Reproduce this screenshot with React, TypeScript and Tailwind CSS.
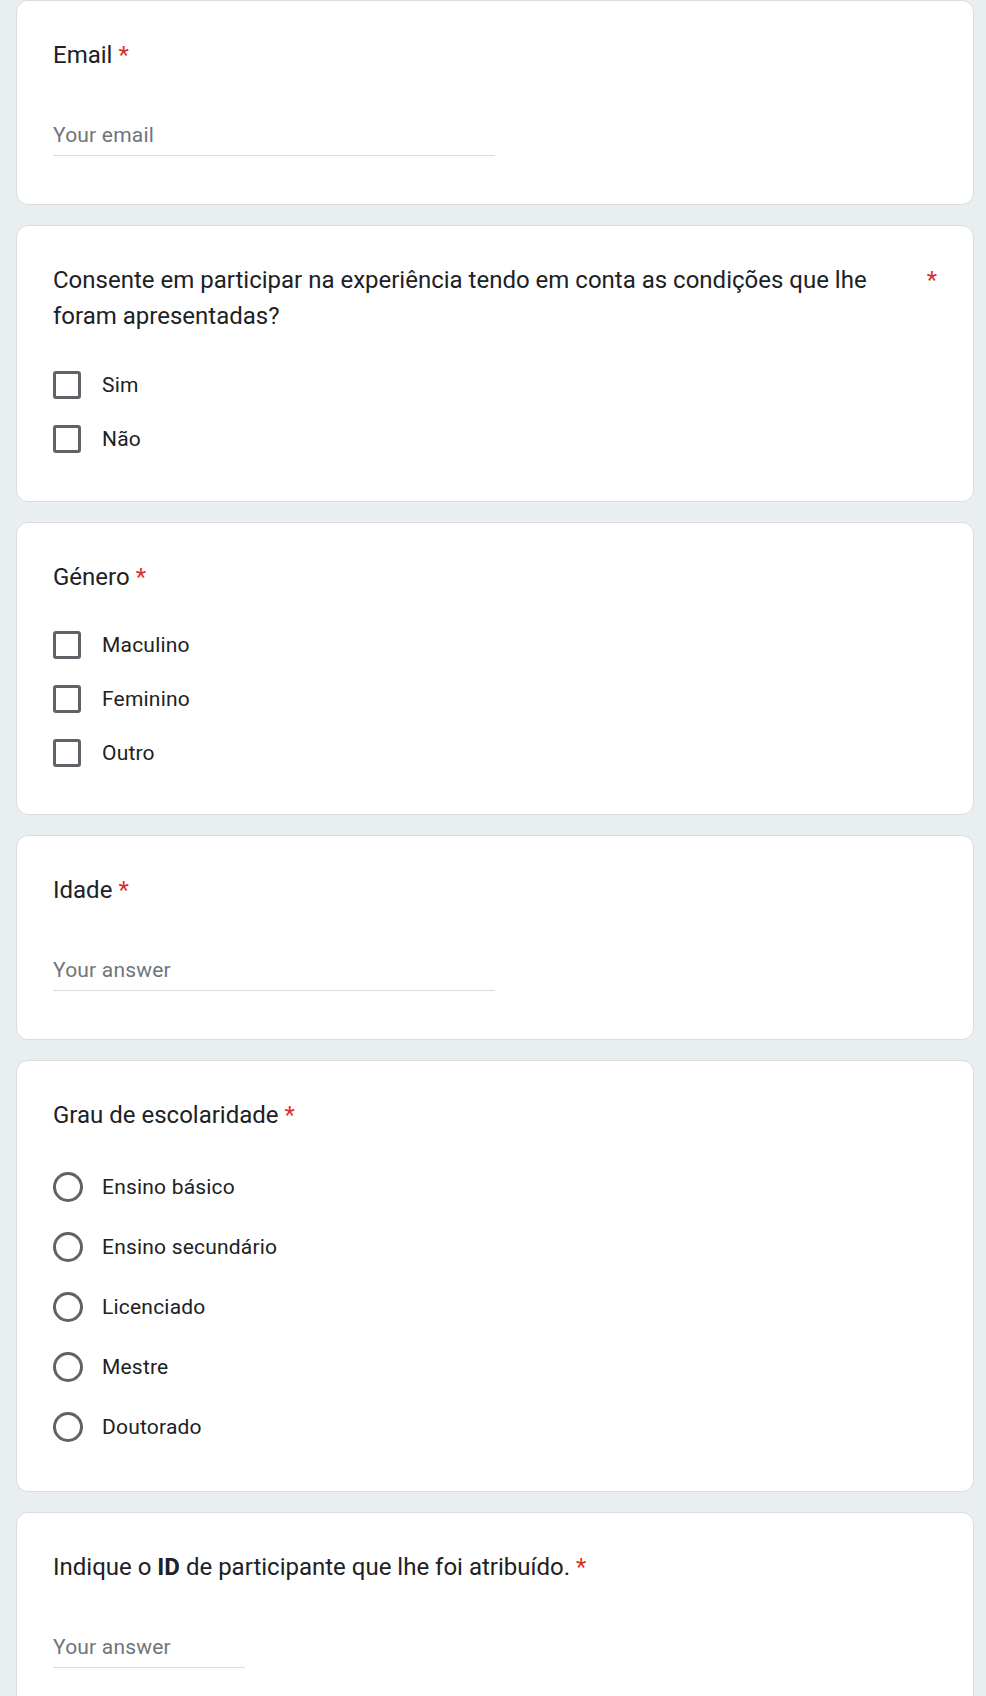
import React from "react";

type Props = { children: React.ReactNode; pb?: string };

const Card = ({ children, pb = "pb-[35px]" }: Props) => (
  <div className={`bg-white border border-[#dadce0] rounded-[12px] pt-[36px] px-[36px] ${pb}`}>
    {children}
  </div>
);

const Title = ({ children }: { children: React.ReactNode }) => (
  <div className="flex text-[24px] leading-[36px] text-[#202124]">
    <span>{children}</span>
    <span className="shrink-0 pl-[6px] text-[#d93025]">*</span>
  </div>
);

const TextInput = ({ placeholder, width }: { placeholder: string; width: string }) => (
  <div className={`mt-[35px] h-[48px] flex items-end pb-[5px] border-b-[1.5px] border-[#dadce0] ${width}`}>
    <span className="text-[21px] leading-[30px] text-[#70757a] tracking-[0.2px]">{placeholder}</span>
  </div>
);

const CheckOption = ({ label }: { label: string }) => (
  <div className="h-[54px] flex items-center gap-[21px]">
    <div className="w-[28px] h-[28px] border-[3px] border-[#5f6368] rounded-[3px] shrink-0" />
    <span className="text-[21px] leading-[30px] text-[#202124] tracking-[0.2px]">{label}</span>
  </div>
);

const RadioOption = ({ label }: { label: string }) => (
  <div className="h-[60px] flex items-center gap-[19px]">
    <div className="w-[30px] h-[30px] border-[3px] border-[#5f6368] rounded-full shrink-0" />
    <span className="text-[21px] leading-[30px] text-[#202124] tracking-[0.2px]">{label}</span>
  </div>
);

export default function App() {
  return (
    <div className="min-h-screen bg-[#e9eef1] pl-[16px] pr-[12px] font-['Roboto','Liberation_Sans',sans-serif]">
      <div className="flex flex-col gap-[20px]">
        <Card pb="pb-[48px]">
          <Title>Email</Title>
          <TextInput placeholder="Your email" width="w-1/2" />
        </Card>

        <Card pb="pb-[35px]">
          <Title>Consente em participar na experiência tendo em conta as condições que lhe foram apresentadas?</Title>
          <div className="mt-[24px]">
            <CheckOption label="Sim" />
            <CheckOption label="Não" />
          </div>
        </Card>

        <Card pb="pb-[34px]">
          <Title>Género</Title>
          <div className="mt-[23px]">
            <CheckOption label="Maculino" />
            <CheckOption label="Feminino" />
            <CheckOption label="Outro" />
          </div>
        </Card>

        <Card pb="pb-[48px]">
          <Title>Idade</Title>
          <TextInput placeholder="Your answer" width="w-1/2" />
        </Card>

        <Card pb="pb-[34px]">
          <Title>Grau de escolaridade</Title>
          <div className="mt-[24px]">
            <RadioOption label="Ensino básico" />
            <RadioOption label="Ensino secundário" />
            <RadioOption label="Licenciado" />
            <RadioOption label="Mestre" />
            <RadioOption label="Doutorado" />
          </div>
        </Card>

        <Card pb="pb-[48px]">
          <Title>
            Indique o <b className="font-bold">ID</b> de participante que lhe foi atribuído.
          </Title>
          <TextInput placeholder="Your answer" width="w-[192px]" />
        </Card>
      </div>
    </div>
  );
}
